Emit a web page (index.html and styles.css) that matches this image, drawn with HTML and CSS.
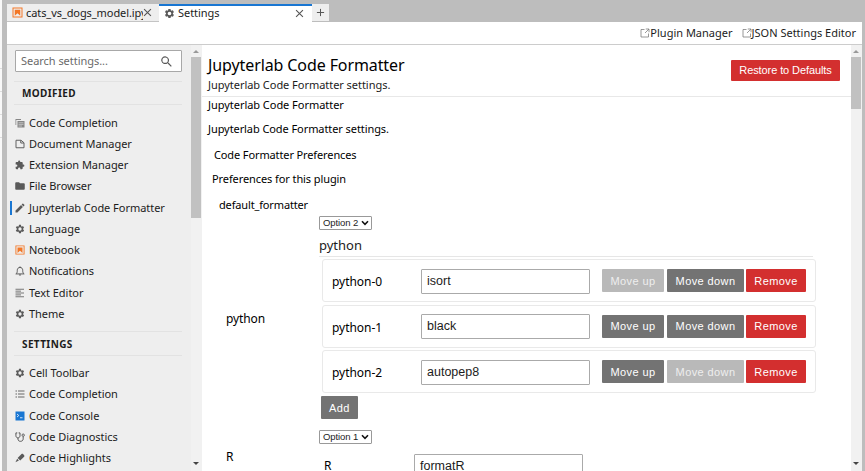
FILE: index.html
```html
<!DOCTYPE html>
<html lang="en">
<head>
<meta charset="utf-8">
<title>Settings</title>
<link rel="stylesheet" href="styles.css">
</head>
<body>
<svg class="defs" aria-hidden="true">
  <symbol id="gear" viewBox="0 0 24 24"><path fill-rule="evenodd" d="M19.4 13c.1-.3.1-.7.1-1s0-.7-.1-1l2.1-1.6c.2-.2.3-.4.1-.7l-2-3.4c-.1-.2-.4-.3-.6-.2l-2.5 1c-.5-.4-1.1-.7-1.7-1L14.400 2.500c0-.3-.2-.5-.5-.5h-4c-.2 0-.4.200-.5.500L9 5.100c-.6.300-1.200.600-1.700 1l-2.500-1c-.2-.1-.5 0-.6.200l-2 3.400c-.1.300-.1.500.1.700L4.500 11c-.1.300-.1.700-.1 1s0 .7.100 1l-2.200 1.600c-.2.200-.2.400-.1.700l2 3.400c.1.200.4.300.6.200l2.500-1c.5.400 1.100.7 1.700 1l.4 2.600c.1.300.3.500.5.500h4c.3 0 .5-.2.500-.5l.4-2.600c.6-.3 1.200-.6 1.700-1l2.500 1c.2.100.5 0 .6-.2l2-3.400c.1-.3.100-.5-.1-.7zM12 16a4 4 0 1 1 0-8 4 4 0 0 1 0 8z"/></symbol>
  <symbol id="book" viewBox="0 0 22 22"><path fill="#f37726" fill-rule="evenodd" d="M1 1h20v20H1zM3 3v16h16V3zM5.500 5.500h11v12l-5.500-5-5.500 5z"/></symbol>
  <symbol id="x" viewBox="0 0 10 10"><path d="M1.200 1.200l7.600 7.600M8.800 1.200L1.200 8.800" stroke="#555" stroke-width="1.200"/></symbol>
  <symbol id="search" viewBox="0 0 18 18"><path d="M12.100 10.900h-.7l-.2-.2a5.400 5.400 0 1 0-.6.600l.3.200v.7l4.200 4.200 1.200-1.300zm-5 0a3.700 3.700 0 1 1 0-7.500 3.700 3.700 0 0 1 0 7.500z"/></symbol>
  <symbol id="complete" viewBox="0 0 20 20"><path d="M1 2h11v2H1zM5 6h14v13H5zM1 2h1.500v12H1z" opacity=".7"/><path d="M7 9.500h10M7 12.700h10M7 16h7" stroke="#eee" stroke-width="1.100"/></symbol>
  <symbol id="file" viewBox="0 0 20 20"><path d="M2 2.500h10l6 5v10H2zM11.500 2.500v5.500H18" fill="none" stroke="#616161" stroke-width="2"/></symbol>
  <symbol id="puzzle" viewBox="1 0 23 24"><path d="M20.500 11H19V7a2 2 0 0 0-2-2h-4V3.500a2.500 2.500 0 0 0-5 0V5H4a2 2 0 0 0-2 2v3.800h1.500a2.700 2.700 0 0 1 0 5.400H2V20c0 1.100.9 2 2 2h3.800v-1.500a2.700 2.700 0 0 1 5.400 0V22H17a2 2 0 0 0 2-2v-4h1.500a2.500 2.500 0 0 0 0-5z"/></symbol>
  <symbol id="folder" viewBox="1.500 2 21 20"><path d="M10 4H4a2 2 0 0 0-2 2v12c0 1.100.9 2 2 2h16a2 2 0 0 0 2-2V8a2 2 0 0 0-2-2h-8z"/></symbol>
  <symbol id="pencil" viewBox="2 2 20 20"><path d="M3 17.200V21h3.800L17.800 9.900l-3.700-3.700zM20.700 7c.4-.4.400-1 0-1.400l-2.300-2.300c-.4-.4-1-.4-1.400 0l-1.800 1.800 3.700 3.700z"/></symbol>
  <symbol id="bell" viewBox="0 0 24 24"><path d="M2 19h20c-3-2-3.500-4-3.500-8.500 0-4-2-7-6.500-7s-6.500 3-6.500 7C5.500 15 5 17 2 19zM12 1v2M9.500 21.500h5" fill="none" stroke="#555" stroke-width="2.300"/></symbol>
  <symbol id="lines" viewBox="0 0 20 20"><path d="M1 2.500h17M1 6.300h11M1 10h17M1 13.800h11M1 17.500h17" stroke="#777" stroke-width="2"/></symbol>
  <symbol id="list" viewBox="0 0 20 20"><path d="M1 4h3M1 10h3M1 16h3M6 4h13M6 10h13M6 16h13" stroke="#666" stroke-width="2"/></symbol>
  <symbol id="console" viewBox="0 0 20 20"><path fill="#1976d2" d="M1 1h18v18H1z"/><path d="M4 6l3.500 3L4 12M10 13.500h5" fill="none" stroke="#fff" stroke-width="1.600"/></symbol>
  <symbol id="steth" viewBox="1 1 22 22"><path d="M6 3H3v6c0 3 2 5 4.500 5S12 12 12 9V3H9M7.500 14v2c0 3.500 2 5.500 5.500 5.500s6-2 6-5.500v-5" fill="none" stroke="#555" stroke-width="2.200"/><circle cx="19" cy="8" r="2.600" fill="none" stroke="#555" stroke-width="2"/></symbol>
  <symbol id="marker" viewBox="0 1 23 22"><path d="M1 22l4-8 4 4zM6 12l9-9c1-1 2.500-1 3.500 0l2.500 2.500c1 1 1 2.500 0 3.500l-9 9z"/></symbol>
  <symbol id="launch" viewBox="0 0 20 20"><path d="M9 3H2v15h15v-7M11.500 2H18v6.500M18 2l-8 8" fill="none" stroke="#777" stroke-width="1.500"/></symbol>
  <symbol id="chev" viewBox="0 0 8 6"><path d="M1 1.300l3 3 3-3" fill="none" stroke="#111" stroke-width="1.600"/></symbol>
</svg>
<div class="app">
  <div class="edge"><i></i><i></i><i></i><i></i></div>
  <div class="window">
    <div class="tabs">
      <div class="tab"><svg class="ticon"><use href="#book"/></svg><span class="label clip">cats_vs_dogs_model.ipy</span><svg class="close"><use href="#x"/></svg></div>
      <div class="tab current"><svg class="ticon"><use href="#gear"/></svg><span class="label">Settings</span><svg class="close"><use href="#x"/></svg></div>
      <div class="plus"><svg viewBox="0 0 10 10"><path d="M5 1v8M1 5h8" stroke="#555" stroke-width="1.100"/></svg></div>
    </div>
    <div class="toolbar">
      <a class="tool plugin"><svg><use href="#launch"/></svg><span>Plugin Manager</span></a>
      <a class="tool json"><svg><use href="#launch"/></svg><span>JSON Settings Editor</span></a>
    </div>
    <div class="body">
      <nav class="sidebar">
        <div class="search"><span>Search settings...</span><svg><use href="#search"/></svg></div>
        <h2 class="modified">MODIFIED</h2>
        <ul>
          <li><svg><use href="#complete"/></svg><span>Code Completion</span></li>
          <li><svg><use href="#file"/></svg><span>Document Manager</span></li>
          <li><svg><use href="#puzzle"/></svg><span>Extension Manager</span></li>
          <li><svg><use href="#folder"/></svg><span>File Browser</span></li>
          <li class="selected"><svg><use href="#pencil"/></svg><span>Jupyterlab Code Formatter</span></li>
          <li><svg><use href="#gear"/></svg><span>Language</span></li>
          <li><svg><use href="#book"/></svg><span>Notebook</span></li>
          <li><svg><use href="#bell"/></svg><span>Notifications</span></li>
          <li><svg><use href="#lines"/></svg><span>Text Editor</span></li>
          <li><svg><use href="#gear"/></svg><span>Theme</span></li>
        </ul>
        <h2 class="rest">SETTINGS</h2>
        <ul>
          <li><svg><use href="#gear"/></svg><span>Cell Toolbar</span></li>
          <li><svg><use href="#list"/></svg><span>Code Completion</span></li>
          <li><svg><use href="#console"/></svg><span>Code Console</span></li>
          <li><svg><use href="#steth"/></svg><span>Code Diagnostics</span></li>
          <li><svg><use href="#marker"/></svg><span>Code Highlights</span></li>
        </ul>
      </nav>
      <div class="scroll side"><b class="up"></b><div class="thumb"></div><b class="down"></b></div>
      <main>
        <header>
          <div><h1>Jupyterlab Code Formatter</h1><p>Jupyterlab Code Formatter settings.</p></div>
          <button class="restore">Restore to Defaults</button>
        </header>
        <p class="line l1">Jupyterlab Code Formatter</p>
        <p class="line l2">Jupyterlab Code Formatter settings.</p>
        <p class="line l3">Code Formatter Preferences</p>
        <p class="line l4">Preferences for this plugin</p>
        <p class="line l5">default_formatter</p>
        <section class="group py">
          <div class="key">python</div>
          <div class="value">
            <div class="select"><span>Option 2</span><svg><use href="#chev"/></svg></div>
            <h3>python</h3>
            <div class="card"><label>python-0</label><div class="input">isort</div><button class="btn mu off">Move up</button><button class="btn md">Move down</button><button class="btn rm">Remove</button></div>
            <div class="card"><label>python-1</label><div class="input">black</div><button class="btn mu">Move up</button><button class="btn md">Move down</button><button class="btn rm">Remove</button></div>
            <div class="card"><label>python-2</label><div class="input">autopep8</div><button class="btn mu">Move up</button><button class="btn md off">Move down</button><button class="btn rm">Remove</button></div>
            <button class="btn add">Add</button>
          </div>
        </section>
        <section class="group r">
          <div class="key">R</div>
          <div class="value">
            <div class="select"><span>Option 1</span><svg><use href="#chev"/></svg></div>
            <div class="row"><label>R</label><div class="input">formatR</div></div>
          </div>
        </section>
      </main>
      <div class="scroll page"><b class="up"></b><div class="thumb"></div><b class="down"></b></div>
    </div>
  </div>
</div>
</body>
</html>
```
FILE: styles.css
```css
* { box-sizing: border-box; margin: 0; padding: 0; }
body { width: 865px; height: 471px; overflow: hidden; font: 11px/16px "Noto Sans", "Open Sans", sans-serif; letter-spacing: -.04px; color: #1c1c1c; background: #fff; }
.defs { display: none; }
svg { flex: none; fill: #5a5a5a; }
span, p, h1, h2, h3, label, button { white-space: nowrap; }
.app { display: flex; height: 471px; background: #bdbdbd; }
.edge { width: 2px; background: #f8f8f8; padding-top: 46px; }
.edge i { display: block; height: 23px; border-bottom: 1px solid #ddd; }
.window { margin-left: 5px; width: 855px; padding-top: 4px; display: flex; flex-direction: column; }
.tabs { display: flex; height: 18px; }
.tab { width: 152px; height: 18px; background: #eee; border-bottom: 1px solid #c4c4c4; display: flex; align-items: center; padding: 0 7px 0 5px; }
.tab.current { width: 153px; background: #fff; border-top: 2px solid #1976d2; border-bottom: 0; padding: 0 8px 2px 5px; }
.ticon { width: 11px; height: 11px; margin-right: 2px; }
.tab .label { flex: 1; font-size: 11px; margin-left: 1px; }
.clip { overflow: hidden; letter-spacing: -.08px; }
.close { width: 9px; height: 9px; }
.plus { width: 17px; height: 17px; background: #eee; display: flex; align-items: center; justify-content: center; }
.plus svg { width: 9px; height: 9px; }
.toolbar { height: 23px; background: #fff; border-bottom: 1px solid #ccc; display: flex; justify-content: flex-end; gap: 9px; padding: 0 6px 0 0; font-size: 11px; letter-spacing: 0; }
.tool { display: flex; align-items: center; }
.tool svg { width: 10px; height: 10px; }
.body { display: flex; height: 426px; }
.sidebar { width: 184px; background: #eee; padding-top: 5px; overflow: hidden; }
.search { width: 167px; height: 22px; margin-left: 8px; background: #fff; border: 1px solid #a8a8a8; border-radius: 1px; display: flex; align-items: center; justify-content: space-between; padding: 0 8px 0 5px; color: #6a6a6a; }
.search svg { width: 13px; height: 13px; }
h2 { margin-left: 7px; width: 168px; border: solid #e2e2e2; border-width: 1px 0; padding-left: 8px; font-size: 10px; font-weight: 700; letter-spacing: .38px; }
.modified { margin-top: 9px; height: 24px; line-height: 22px; }
.rest { margin-top: 6px; height: 25px; line-height: 24px; }
ul { list-style: none; padding-top: 7px; }
.modified + ul { padding-top: 7px; }
.rest + ul { padding-top: 7px; }
li { height: 21.250px; padding-left: 8px; display: flex; align-items: center; }
li svg { width: 10px; height: 10px; margin-right: 4px; }
li.selected { background: linear-gradient(#1976d2, #1976d2) 3px 4px / 2px 14px no-repeat; }
.scroll { width: 11px; background: #f1f1f1; display: flex; flex-direction: column; align-items: flex-start; }
.scroll b { border: 3px solid transparent; }
.up { border-bottom-color: #999 !important; border-top: 0 !important; margin: 5px 0 4px 2px; }
.down { border-top-color: #444 !important; border-bottom: 0 !important; margin: auto 0 6px 2px; }
.thumb { width: 10px; background: #c1c1c1; }
.side .thumb { height: 161px; }
.page .thumb { height: 52px; }
main { width: 649px; background: #fff; overflow: hidden; }
header { height: 52px; border-bottom: 1px solid #e8e8e8; display: flex; justify-content: space-between; padding: 9px 12px 0 6px; }
h1 { font-size: 16px; line-height: 23px; font-weight: 400; color: #000; letter-spacing: -.1px; }
header p { line-height: 15px; }
.restore { width: 109px; height: 21px; margin: 6px -1px 0 0; background: #d32f2f; color: #fff; border: 0; border-radius: 1px; font: 11px/18px "Liberation Sans", sans-serif; letter-spacing: -.1px; padding-bottom: 2px; }
.line { color: #000; height: 16px; line-height: 15px; }
.l1 { margin-left: 6px; }
.l2 { margin: 8px 0 0 6px; letter-spacing: -.08px; }
.l3 { margin: 10px 0 0 12px; letter-spacing: -.12px; }
.l4 { margin: 8px 0 0 10px; letter-spacing: -.09px; }
.l5 { margin: 10px 0 0 17px; letter-spacing: -.15px; }
.group { display: flex; }
.key { width: 117px; padding-left: 24px; font-size: 12px; letter-spacing: -.1px; color: #000; }
.py { margin-top: 3px; height: 214px; }
.py .key { padding-top: 95px; }
.r .key { padding-top: 19px; }
.select { width: 53px; height: 14px; border: 1px solid #999; border-radius: 1px; display: flex; align-items: center; justify-content: space-between; padding: 0 2px 0 3px; font: 9.500px/12px "Liberation Sans", sans-serif; letter-spacing: -.1px; }
.select svg { width: 8px; height: 6px; }
h3 { width: 494px; height: 27px; border-bottom: 1px solid #e6e6e6; font-size: 13px; line-height: 30px; font-weight: 400; letter-spacing: 0; }
.card { width: 494px; height: 43px; margin: 2px 0 2.500px 3px; border: 1px solid #e9e9e9; border-radius: 3px; display: flex; align-items: center; padding-left: 9px; }
.card label { width: 89px; font-size: 12px; letter-spacing: -.05px; color: #000; padding-top: 3px; }
.input { width: 169px; height: 25px; border: 1px solid #aaa; border-radius: 1px; padding-left: 5px; font: 12.500px/23px "Liberation Sans", sans-serif; letter-spacing: 0; background: #fff; }
.card .input { margin-top: 1px; }
.btn { height: 23px; border: 0; border-radius: 1px; background: #737373; color: #fff; font: 11px "Liberation Sans", sans-serif; letter-spacing: .4px; }
.btn.off { background: #b9b9b9; color: #eee; }
.mu { width: 62px; margin-left: 12px; }
.md { width: 77px; margin-left: 3px; }
.rm { width: 60px; margin-left: 2px; }
.btn.rm { background: #d32f2f; }
.add { width: 37px; margin: 3px 0 0 2px; display: block; }
.row { display: flex; margin-top: 10px; padding-left: 5px; }
.row label { width: 90px; font-size: 12px; padding-top: 4px; color: #000; }
```
